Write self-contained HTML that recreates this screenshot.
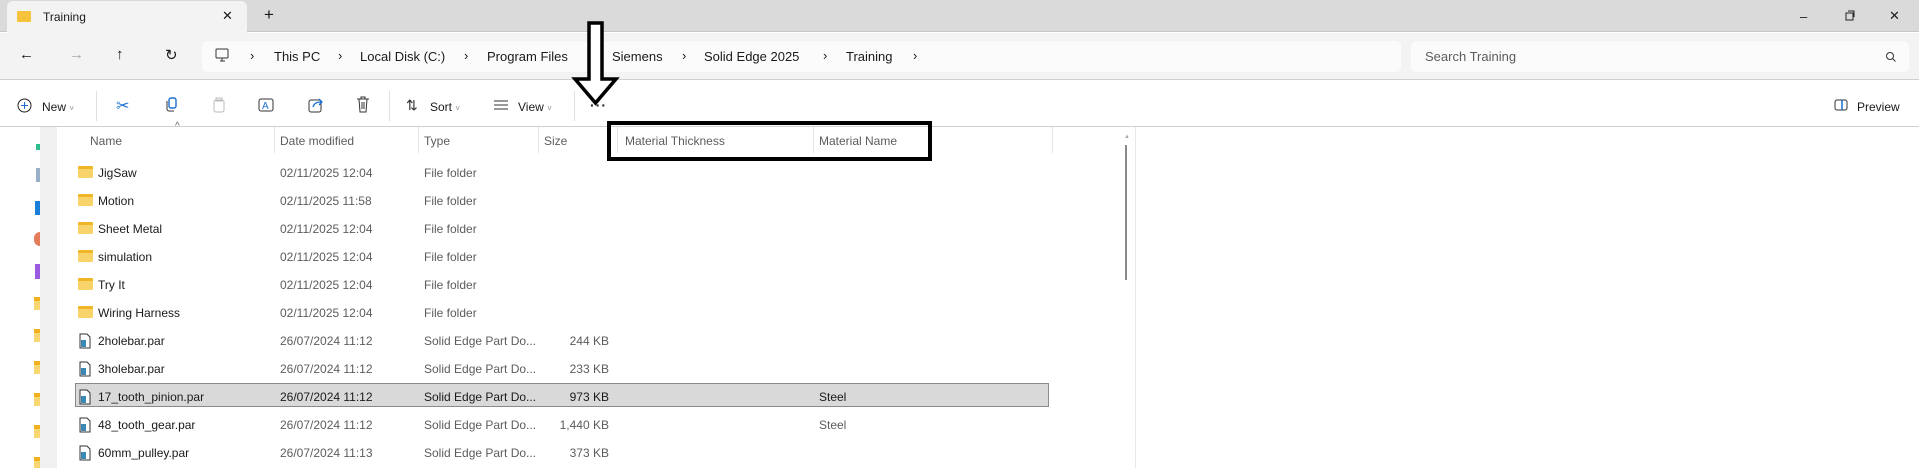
<!DOCTYPE html><html><head><style>
*{margin:0;padding:0;box-sizing:border-box}
body{width:1919px;height:468px;overflow:hidden;background:#fff;font-family:"Liberation Sans",sans-serif;font-size:12px;color:#1a1a1a;position:relative}
.a{position:absolute;white-space:nowrap}
.g{color:#5c5c5c}
svg{position:absolute}
</style></head><body>
<div class="a" style="left:0;top:0;width:1919px;height:32px;background:#dadada;border-bottom:1px solid #c8c8c8"></div>
<div class="a" style="left:7px;top:1px;width:240px;height:32px;background:#f3f3f3;border-radius:6px 6px 0 0"></div>
<div class="a" style="left:17px;top:11px;width:14px;height:11px;background:#f7c33d;border-radius:1px"></div>
<div class="a" style="left:43px;top:10px;font-size:12px">Training</div>
<div class="a" style="left:222px;top:8px;font-size:13px">✕</div>
<div class="a" style="left:264px;top:5px;font-size:17px">+</div>
<div class="a" style="left:1800px;top:9px;font-size:13px">–</div>
<svg style="left:1845px;top:10px" width="11" height="11"><rect x="1" y="3" width="7" height="7" fill="none" stroke="#222"/><path d="M3 1h6v6" fill="none" stroke="#222"/></svg>
<div class="a" style="left:1889px;top:8px;font-size:13px">✕</div>
<div class="a" style="left:0;top:33px;width:1919px;height:47px;background:#f3f3f3;border-bottom:1px solid #d0d0d0"></div>
<div class="a" style="left:19px;top:46px;font-size:15px">←</div>
<div class="a" style="left:69px;top:46px;font-size:15px;color:#aaa">→</div>
<div class="a" style="left:116px;top:46px;font-size:15px">↑</div>
<div class="a" style="left:165px;top:46px;font-size:15px">↻</div>
<div class="a" style="left:202px;top:41px;width:1199px;height:31px;background:#fbfbfb;border-radius:5px"></div>
<svg style="left:215px;top:48px" width="15" height="16"><rect x="1" y="1" width="12" height="9" rx="1" fill="none" stroke="#333"/><path d="M5 13h5M7 10v3" stroke="#333"/></svg>
<div class="a" style="left:250px;top:48px;font-size:13px">›</div>
<div class="a" style="left:274px;top:49px;font-size:13px">This PC</div>
<div class="a" style="left:338px;top:48px;font-size:13px">›</div>
<div class="a" style="left:360px;top:49px;font-size:13px">Local Disk (C:)</div>
<div class="a" style="left:464px;top:48px;font-size:13px">›</div>
<div class="a" style="left:487px;top:49px;font-size:13px">Program Files</div>
<div class="a" style="left:589px;top:48px;font-size:13px">›</div>
<div class="a" style="left:612px;top:49px;font-size:13px">Siemens</div>
<div class="a" style="left:682px;top:48px;font-size:13px">›</div>
<div class="a" style="left:704px;top:49px;font-size:13px">Solid Edge 2025</div>
<div class="a" style="left:823px;top:48px;font-size:13px">›</div>
<div class="a" style="left:846px;top:49px;font-size:13px">Training</div>
<div class="a" style="left:913px;top:48px;font-size:13px">›</div>
<div class="a" style="left:1411px;top:41px;width:498px;height:31px;background:#fbfbfb;border-radius:5px"></div>
<div class="a g" style="left:1425px;top:49px;font-size:13px">Search Training</div>
<svg style="left:1885px;top:51px" width="11" height="11"><circle cx="5" cy="5" r="3.5" fill="none" stroke="#333"/><path d="M7.5 7.5l3 3" stroke="#333"/></svg>
<div class="a" style="left:0;top:126px;width:1919px;height:1px;background:#d0d0d0"></div>
<svg style="left:17px;top:98px" width="15" height="15"><circle cx="7.5" cy="7.5" r="6.5" fill="none" stroke="#222"/><path d="M7.5 4v7M4 7.5h7" stroke="#1a6fd0"/></svg>
<div class="a" style="left:42px;top:100px">New <span style="font-size:8px;color:#888">˅</span></div>
<div class="a" style="left:96px;top:91px;width:1px;height:30px;background:#e0e0e0"></div>
<div class="a" style="left:116px;top:96px;font-size:16px;color:#1a6fd0">✂</div>
<svg style="left:164px;top:97px" width="14" height="16"><rect x="5" y="1" width="7" height="10" rx="2" fill="none" stroke="#1a6fd0" stroke-width="1.4"/><path d="M3 4v8a2 2 0 002 2h5" fill="none" stroke="#333"/></svg>
<svg style="left:212px;top:97px" width="14" height="16"><rect x="2" y="3" width="10" height="12" rx="2" fill="none" stroke="#bbb"/><rect x="4" y="1" width="6" height="3" fill="none" stroke="#bbb"/></svg>
<svg style="left:258px;top:97px" width="16" height="16"><rect x="1" y="2" width="14" height="12" rx="2" fill="none" stroke="#333"/><text x="4" y="12" font-size="10" fill="#1a6fd0" font-family="Liberation Sans">A</text></svg>
<svg style="left:308px;top:97px" width="16" height="16"><rect x="1" y="3" width="12" height="12" rx="2" fill="none" stroke="#333"/><path d="M5 10c1-4 4-5 8-5M11 2l3 3-3 3" fill="none" stroke="#1a6fd0" stroke-width="1.3"/></svg>
<svg style="left:356px;top:96px" width="14" height="17"><path d="M1 3h12M5 3V1h4v2M3 3l1 13h6l1-13M6 6v7M8 6v7" fill="none" stroke="#333"/></svg>
<div class="a" style="left:389px;top:91px;width:1px;height:30px;background:#e0e0e0"></div>
<div class="a" style="left:406px;top:97px;font-size:14px;color:#333">⇅</div>
<div class="a" style="left:430px;top:100px">Sort <span style="font-size:8px;color:#888">˅</span></div>
<svg style="left:494px;top:100px" width="14" height="10"><path d="M0 1h14M0 5h14M0 9h14" stroke="#333"/></svg>
<div class="a" style="left:518px;top:100px">View <span style="font-size:8px;color:#888">˅</span></div>
<div class="a" style="left:574px;top:91px;width:1px;height:30px;background:#e0e0e0"></div>
<div class="a" style="left:590px;top:97px;font-size:14px;font-weight:bold;letter-spacing:1px">···</div>
<svg style="left:1834px;top:99px" width="14" height="12"><rect x="1" y="1" width="12" height="10" rx="2" fill="none" stroke="#333"/><path d="M8 1v10" stroke="#1a6fd0" stroke-width="1.5"/></svg>
<div class="a" style="left:1857px;top:100px">Preview</div>
<!-- sidebar -->
<div class="a" style="left:40px;top:127px;width:17px;height:341px;background:#f0f0f0"></div>
<div class="a" style="left:36px;top:144px;width:4px;height:6px;background:#2dbd8d"></div>
<div class="a" style="left:36px;top:168px;width:4px;height:14px;background:#9ab0c8"></div>
<div class="a" style="left:35px;top:201px;width:5px;height:14px;background:#1a7fd8"></div>
<div class="a" style="left:34px;top:232px;width:6px;height:14px;background:#e57c5c;border-radius:7px 0 0 7px"></div>
<div class="a" style="left:35px;top:264px;width:5px;height:15px;background:#9a5be0"></div>
<div class="a" style="left:34px;top:297px;width:6px;height:13px;background:#f8d672;border-top:4px solid #f0b020"></div>
<div class="a" style="left:34px;top:329px;width:6px;height:13px;background:#f8d672;border-top:4px solid #f0b020"></div>
<div class="a" style="left:34px;top:361px;width:6px;height:13px;background:#f8d672;border-top:4px solid #f0b020"></div>
<div class="a" style="left:34px;top:393px;width:6px;height:13px;background:#f8d672;border-top:4px solid #f0b020"></div>
<div class="a" style="left:34px;top:425px;width:6px;height:13px;background:#f8d672;border-top:4px solid #f0b020"></div>
<div class="a" style="left:34px;top:457px;width:6px;height:11px;background:#f8d672;border-top:4px solid #f0b020"></div>
<!-- headers -->
<div class="a" style="left:175px;top:121px;font-size:10px;color:#666">^</div>
<div class="a g" style="left:90px;top:134px">Name</div>
<div class="a" style="left:274px;top:127px;width:1px;height:26px;background:#e5e5e5"></div>
<div class="a g" style="left:280px;top:134px">Date modified</div>
<div class="a" style="left:418px;top:127px;width:1px;height:26px;background:#e5e5e5"></div>
<div class="a g" style="left:424px;top:134px">Type</div>
<div class="a" style="left:538px;top:127px;width:1px;height:26px;background:#e5e5e5"></div>
<div class="a g" style="left:544px;top:134px">Size</div>
<div class="a" style="left:617px;top:127px;width:1px;height:26px;background:#e5e5e5"></div>
<div class="a g" style="left:625px;top:134px">Material Thickness</div>
<div class="a" style="left:813px;top:127px;width:1px;height:26px;background:#e5e5e5"></div>
<div class="a g" style="left:819px;top:134px">Material Name</div>
<div class="a" style="left:1052px;top:127px;width:1px;height:26px;background:#e5e5e5"></div>
<!-- scrollbar -->
<div class="a" style="left:1124px;top:134px;font-size:6px;color:#aaa">▲</div>
<div class="a" style="left:1125px;top:145px;width:2px;height:135px;background:#8a8a8a"></div>
<div class="a" style="left:1135px;top:127px;width:1px;height:341px;background:#e8e8e8"></div>
<!-- selected -->
<div class="a" style="left:75px;top:383px;width:974px;height:24px;background:#d9d9d9;border:1px solid #8a8a8a"></div>
<div id="rows"></div>
<!-- black annotation box -->
<div class="a" style="left:607px;top:121px;width:325px;height:40px;border:4px solid #000"></div>
<svg style="left:570px;top:20px" width="52" height="86"><path d="M19 3h13v56h14L25.5 83 5 59h14z" fill="#fff" stroke="#000" stroke-width="3.5" stroke-linejoin="miter"/></svg>
<script>
var r=[["JigSaw","02/11/2025 12:04","File folder","",""],["Motion","02/11/2025 11:58","File folder","",""],["Sheet Metal","02/11/2025 12:04","File folder","",""],["simulation","02/11/2025 12:04","File folder","",""],["Try It","02/11/2025 12:04","File folder","",""],["Wiring Harness","02/11/2025 12:04","File folder","",""],["2holebar.par","26/07/2024 11:12","Solid Edge Part Do...","244 KB",""],["3holebar.par","26/07/2024 11:12","Solid Edge Part Do...","233 KB",""],["17_tooth_pinion.par","26/07/2024 11:12","Solid Edge Part Do...","973 KB","Steel"],["48_tooth_gear.par","26/07/2024 11:12","Solid Edge Part Do...","1,440 KB","Steel"],["60mm_pulley.par","26/07/2024 11:13","Solid Edge Part Do...","373 KB",""]];
var h="";r.forEach(function(x,i){var y=165+i*28;var sel=i==8;var c=sel?"#1a1a1a":"#5c5c5c";
if(x[2]=="File folder")h+='<div class="a" style="left:78px;top:'+(y+1)+'px;width:15px;height:12px;background:#f8d36a;border-top:3px solid #f0b428;border-radius:1px"></div>';
else h+='<svg style="left:79px;top:'+y+'px" width="12" height="16"><path d="M1 1h7l3 3v11H1z" fill="#fff" stroke="#333"/><rect x="2" y="7" width="5" height="7" fill="#3c88b4"/></svg>';
h+='<div class="a" style="left:98px;top:'+(y+1)+'px">'+x[0]+'</div><div class="a" style="left:280px;top:'+(y+1)+'px;color:'+c+'">'+x[1]+'</div><div class="a" style="left:424px;top:'+(y+1)+'px;color:'+c+'">'+x[2]+'</div><div class="a" style="left:530px;width:79px;text-align:right;top:'+(y+1)+'px;color:'+c+'">'+x[3]+'</div><div class="a" style="left:819px;top:'+(y+1)+'px;color:'+c+'">'+x[4]+'</div>';});
document.getElementById("rows").innerHTML=h;
</script>
</body></html>
